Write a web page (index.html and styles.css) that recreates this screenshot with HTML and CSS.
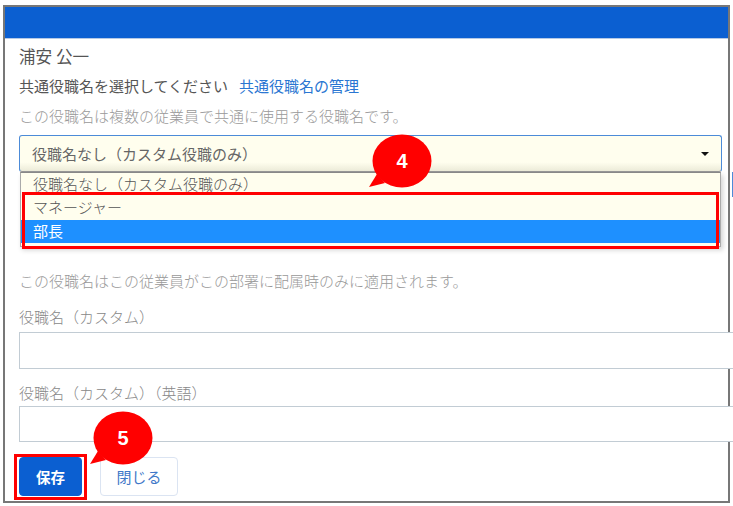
FILE: index.html
```html
<!DOCTYPE html>
<html lang="ja">
<head>
<meta charset="utf-8">
<title>役職名</title>
<link rel="stylesheet" href="styles.css">
</head>
<body>
<div class="frame">
  <div class="header"></div>
  <div class="content">
    <div class="name">浦安 公一</div>
    <div class="row"><span>共通役職名を選択してください</span><a class="link" href="#">共通役職名の管理</a></div>
    <div class="hint">この役職名は複数の従業員で共通に使用する役職名です。</div>
    <div class="select">
      <span>役職名なし（カスタム役職のみ）</span>
      <svg class="caret" width="8" height="4" viewBox="0 0 8 4"><path d="M0 0h8L4 4z" fill="#111"/></svg>
    </div>
    <div class="hint applied">この役職名はこの従業員がこの部署に配属時のみに適用されます。</div>
    <label class="label">役職名（カスタム）</label>
    <div class="input"></div>
    <label class="label second">役職名（カスタム）（英語）</label>
    <div class="input input-second"></div>
    <div class="actions">
      <button class="btn primary">保存</button>
      <button class="btn ghost">閉じる</button>
    </div>
  </div>
  <div class="dropdown">
    <div class="opt first">役職名なし（カスタム役職のみ）</div>
    <div class="opt manager">マネージャー</div>
    <div class="opt selected">部長</div>
  </div>
</div>
<div class="sliver"></div>
<div class="redbox list-box"></div>
<div class="redbox save-box"></div>
<svg class="callout c4" width="64" height="56" viewBox="0 0 64 56"><ellipse cx="33" cy="27" rx="29.500" ry="26.500" fill="#f00"/><path d="M0 53 L16 49 L8 40 Z" fill="#f00"/><text x="33" y="34" text-anchor="middle" class="num">4</text></svg>
<svg class="callout c5" width="64" height="56" viewBox="0 0 64 56"><ellipse cx="33" cy="27" rx="29.500" ry="26.500" fill="#f00"/><path d="M0 53 L16 49 L8 40 Z" fill="#f00"/><text x="33" y="34" text-anchor="middle" class="num">5</text></svg>
</body>
</html>
```
FILE: styles.css
```css
html, body { margin: 0; padding: 0; }
body { width: 733px; height: 506px; position: relative; overflow: hidden; background: #fff; font-family: "Noto Sans CJK JP", "Noto Sans", sans-serif; color: #555; }
.frame { position: absolute; left: 3px; top: 5px; width: 727px; height: 498px; box-sizing: border-box; border: 2px solid #777; background: #fff; }
.header { height: 31px; background: #0b5fd1; border-bottom: 1px solid #b5c9e6; }
.content { padding: 6px 0 0 14px; font-size: 15px; line-height: 22px; font-weight: 400; }
.name { font-size: 16.6px; line-height: 22px; color: #555; }
.row { margin-top: 8px; display: flex; gap: 11px; color: #555; }
.link { color: #2a76d2; text-decoration: none; }
.hint { margin-top: 8px; color: #999; font-weight: 300; }
.select { margin-top: 8px; width: 703px; height: 37px; box-sizing: border-box; border: 1px solid #4c8bd8; border-bottom-color: #999; border-radius: 3px; background: linear-gradient(#fffeee 0 75%, #ecebd8 100%); display: flex; align-items: center; justify-content: space-between; padding: 0 12px; color: #666; }
.applied { margin-top: 98px; }
.label { display: block; margin-top: 14px; color: #888; font-weight: 300; }
.second { margin-top: 13px; }
.input { width: 716px; height: 37px; box-sizing: border-box; margin-top: 4px; border: 1px solid #c2ccd4; border-right: 0; background: #fff; }
.input-second { margin-top: 2px; height: 36px; }
.actions { margin-top: 15px; display: flex; gap: 18px; }
.btn { height: 39px; box-sizing: border-box; border-radius: 4px; font: inherit; font-size: 15px; padding: 0; }
.primary { width: 63px; background: #0b5fd1; border: 1px solid #0b5fd1; color: #fff; font-weight: 700; font-size: 14.5px; }
.ghost { width: 78px; background: #fff; border: 1px solid #dbe4f2; color: #3f78c8; }
.dropdown { position: absolute; left: 15px; top: 165px; width: 701px; height: 75px; box-sizing: border-box; border: 1px solid #aaa; border-top-color: #888; background: #fffeee; font-size: 15px; font-weight: 300; color: #555; padding-bottom: 2px; box-shadow: 2px 3px 5px rgba(0, 0, 0, 0.18); }
.opt { padding-left: 12px; }
.first { height: 21px; line-height: 21px; }
.manager { height: 26px; line-height: 26px; }
.selected { height: 23px; line-height: 22px; background: #1e90ff; color: #fff; font-weight: 400; }
.sliver { position: absolute; left: 732px; top: 172px; width: 1px; height: 25px; background: #4c8bd8; }
.redbox { position: absolute; box-sizing: border-box; border: 3px solid #f00; }
.list-box { left: 22px; top: 192px; width: 697px; height: 57px; }
.save-box { left: 14px; top: 454px; width: 73px; height: 46px; }
.callout { position: absolute; overflow: visible; }
.c4 { left: 369px; top: 134px; }
.c5 { left: 90px; top: 411px; }
.num { fill: #fff; font-family: "Liberation Sans", sans-serif; font-weight: 700; font-size: 20px; }
```
